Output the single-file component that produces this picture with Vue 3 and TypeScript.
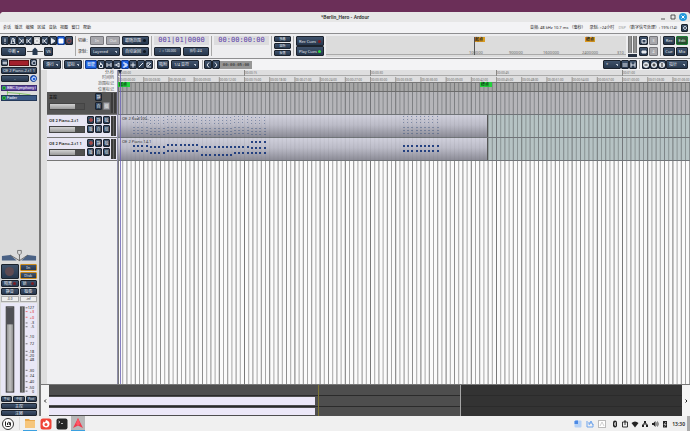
<script setup lang="ts">
interface Note { x: number; y: number; w: number; o: number }

const menus = ['会话', '播送', '编辑', '区域', '音轨', '视图', '窗口', '帮助']

const transportIcons = [
  { name: 'MIDI 紧急停止', d: 'M4 1.5V5M4 6V7' },
  { name: '节拍器', d: 'M2 7L3.3 1.5H4.7L6 7ZM4 5L5.5 2' },
  { name: '跳到起点', d: 'M2 1.5L5 4L2 6.5M6 2V6' },
  { name: '跳到终点', d: 'M6 1.5L3 4L6 6.5M2 2V6' },
  { name: '循环', d: 'M4 2A2 2 0 1 0 4.1 2Z', cls: 'light' },
  { name: '播放选区', d: 'M6 1.5L3 4L6 6.5M2 2V6' },
  { name: '播放', d: 'M2.5 1.5L6 4L2.5 6.5Z', fill: true },
  { name: '停止', d: 'M2 2H6V6H2Z', cls: 'active', fill: true },
  { name: '录音', d: 'M4 2A2 2 0 1 0 4.1 2Z', cls: 'rec' },
]

const toolIcons = [
  { name: '抓取', d: 'M2.5 4V6.5H5.5V3.5M3.5 4V1.5M4.5 4V2.5', cls: '' },
  { name: '范围', d: 'M2 2V6M6 2V6M2.5 4H5.5', cls: '' },
  { name: '剪切', d: 'M1.5 4H3L6 2V6L3 4', cls: '' },
  { name: '伸缩', d: 'M2 2H4V6H2M4 3H6V5H4', cls: 'active' },
  { name: '网格', d: 'M4 1.5V6.5M1.5 4H6.5', cls: '' },
  { name: '绘制', d: 'M2 6L6 2', cls: '' },
  { name: '内部编辑', d: 'M2 2H5M2 2V6H6M3 5L6 2', cls: '' },
]

const PX_PER_SEC = 8.4
const seconds = Math.max(60, (window.innerWidth - 118) / PX_PER_SEC)
const grid = Array.from({ length: Math.ceil(seconds * 2) }, (_, i) => ({
  x: 1 + (i * PX_PER_SEC) / 2,
  o: i % 6 === 0 ? 0.85 : i % 2 === 0 ? 0.7 : 0.55,
}))

const pad = (n: number) => String(n).padStart(2, '0')
const stamp = (s: number) => `00:${pad(Math.floor(s / 60))}:${pad(s % 60)}`
const majors = Array.from({ length: Math.floor((seconds - 2) / 15) + 1 }, (_, i) => ({ x: 1 + i * 15 * PX_PER_SEC, t: stamp(i * 15) }))
const minors = Array.from({ length: Math.floor((seconds - 2) / 3) + 1 }, (_, i) => ({ x: 1 + i * 3 * PX_PER_SEC, t: stamp(i * 3) + ':00' }))

const phrases: [number, number, number[]][] = [
  [16, 4, [145, 150]], [33, 4, [146, 152]], [50, 8, [144, 150]],
  [84, 8, [146, 154]], [117, 4, [146, 152]], [134, 4, [141, 147, 152]],
  [286, 9, [145, 150]],
]
const pianoNotes: Note[] = phrases.flatMap(([x, n, ys]) =>
  ys.flatMap((y) => Array.from({ length: n }, (_, i) => ({ x: Math.round(x + i * 4.2), y: y - 70, w: 2, o: 0.95 }))))
const padRows = [116, 119, 122, 127, 130, 133]
const padNotes: Note[] = phrases.flatMap(([x, n], p) =>
  padRows.flatMap((y, r) => Array.from({ length: n }, (_, i) => ({
    x: Math.round(x + i * 4.2), y: y - 70 + (p % 2 && p < 6 ? 1 : 0), w: r < 3 ? 1 : 2, o: r < 3 ? 0.45 : 0.4,
  }))))

const meterMarks = [
  { t: '127', y: 3 }, { t: '+3', y: 7, red: true }, { t: '+0', y: 13, red: true }, { t: '-3', y: 19 },
  { t: '-5', y: 23 }, { t: '-10', y: 33 }, { t: '72', y: 41 }, { t: '-18', y: 49 }, { t: '-20', y: 53 },
  { t: '48', y: 58 }, { t: '-30', y: 69 }, { t: '24', y: 75 }, { t: '-40', y: 81 }, { t: '-50', y: 87 }, { t: '0', y: 91 },
]

const tracks = ['OE 2 Piano-2-t1', 'OE 2 Piano-2-t1 1']
const miniTicks = [
  { x: 143, t: '100000' }, { x: 183, t: '900000' }, { x: 217, t: '1600000' }, { x: 256, t: '2400000' }, { x: 291, t: '310' },
]
</script>

<template>
  <div class="desktop">
    <div class="window">
      <header class="titlebar">
        <span></span>
        <h1>*Berlin_Hero - Ardour</h1>
        <div class="winctl">
          <button aria-label="最小化"><svg viewBox="0 0 8 8"><path d="M2 6H6" /></svg></button>
          <button aria-label="最大化"><svg viewBox="0 0 8 8"><path d="M2 2H6V6H2Z" /></svg></button>
          <button class="close" aria-label="关闭"><svg viewBox="0 0 8 8"><path d="M2.5 2.5L5.5 5.5M5.5 2.5L2.5 5.5" /></svg></button>
        </div>
      </header>

      <nav class="menubar">
        <div class="menus"><a v-for="m in menus" :key="m" href="#">{{ m }}</a></div>
        <div class="status">
          <span>音频: 48 kHz 10.7 ms （毫秒）</span>
          <span>录制: &gt;24小时</span>
          <span><i>DSP</i> （数字信号处理）: 19% (14)</span>
          <button class="btn sq" aria-label="日志"><svg viewBox="0 0 8 8"><path d="M4 2.500A1.500 1.500 0 1 0 4.100 2.500Z" /></svg></button>
        </div>
      </nav>

      <section class="transport">
        <div class="stack main-transport">
          <div class="line">
            <button v-for="b in transportIcons" :key="b.name" class="btn icon" :class="b.cls" :aria-label="b.name">
              <svg viewBox="0 0 8 8"><path :d="b.d" :class="{ solid: b.fill }" /></svg>
            </button>
          </div>
          <div class="line">
            <button class="btn sync">中断 ▾</button>
            <svg class="shuttle" viewBox="0 0 16 9"><path d="M0 4.5H16" stroke="#555" /><path d="M5.500 3L8 .5L10.500 3V8H5.500Z" fill="#26384f" /></svg>
            <button class="btn vs">VS</button>
          </div>
        </div>
        <hr />
        <div class="stack captions"><span>切换：</span><span>录制：</span></div>
        <div class="stack punch">
          <div class="line gap3"><button class="btn off grow">In</button><button class="btn off grow">Out</button></div>
          <select class="btn" aria-label="录制模式"><option>Layered</option></select>
        </div>
        <div class="stack follow">
          <button class="btn led">跟随范围<b></b></button>
          <button class="btn led">自动返回<b></b></button>
        </div>
        <hr />
        <div class="stack clockbox">
          <output class="clock">001|01|0000</output>
          <div class="line gap3"><button class="btn grow tiny">♩ = 120.000</button><button class="btn grow tiny">拍号: 4/4</button></div>
        </div>
        <hr />
        <div class="stack clockbox"><output class="clock">00:00:00:00</output></div>
        <hr />
        <div class="stack three">
          <button class="btn">独奏</button><button class="btn">监听</button><button class="btn">反馈</button>
        </div>
        <hr />
        <div class="stack cues">
          <button class="btn led">Rec Cues<b class="red"></b></button>
          <button class="btn led">Play Cues<b class="green"></b></button>
        </div>
        <svg class="mini">
          <path d="M0 18.500H1000" stroke="#aaa" />
          <rect x="148" y="1" width="11" height="5" fill="#dc9a20" /><path d="M148.500 1V19" stroke="#555" />
          <rect x="259" y="1" width="10" height="5" fill="#dc9a20" />
          <text x="149" y="5" class="flag">起点</text><text x="260" y="5" class="flag">终点</text>
          <text v-for="m in miniTicks" :key="m.t" :x="m.x" y="18">{{ m.t }}</text>
        </svg>
        <svg class="outmeter" viewBox="0 0 9 21"><path d="M0 0H4V17H0ZM5 0H9V17H5Z" fill="#777" /><path d="M2 0V17M7 0V17" stroke="#aaa" /><path d="M0 18H9V21H0Z" fill="#26303f" /></svg>
        <div class="modes four">
          <button class="btn" aria-label="编辑器列表"><svg viewBox="0 0 8 8"><path d="M2 2.500H6V6H2Z" /></svg></button><button class="btn off">3</button>
          <button class="btn" aria-label="混音器列表"><svg viewBox="0 0 8 8"><path class="solid" d="M2 3H6V5H2Z" /></svg></button><button class="btn off">4</button>
        </div>
        <hr />
        <div class="modes pages">
          <button class="btn">Rec</button><button class="btn on">Edit</button>
          <button class="btn">Cue</button><button class="btn">Mix</button>
        </div>
      </section>

      <main class="body">
        <aside class="strip">
          <div class="line hd"><button class="btn" aria-label="收窄"><svg viewBox="0 0 8 8"><path d="M1.500 4H6.500M3 2.500V5.500M5 2.500V5.500" /></svg></button><span class="tape"></span><button class="btn" aria-label="隐藏"><svg viewBox="0 0 8 8"><path d="M4 2A2 2 0 1 0 4.100 2Z" /></svg></button></div>
          <button class="btn name">OE 2 Piano-2-t1 1</button>
          <div class="line io"><button class="btn grow">-</button><button class="btn active" aria-label="MIDI 输入"><svg viewBox="0 0 8 8"><path d="M4 2A2 2 0 1 0 4.100 2Z" /></svg></button></div>
          <div class="procs">
            <div class="proc plug"><b></b>BBC Symphony Or</div>
            <svg class="cable" viewBox="0 0 39 4"><path d="M7 0V1.500L20 2.500L32 4M7 0V4M20 2V4" fill="none" stroke="#7cbf5e" /></svg>
            <div class="proc"><b></b>Fader</div>
          </div>
          <svg class="pan" viewBox="0 0 39 14">
            <path d="M1 7L10 6L17 12H1ZM38 7L29 6L22 12H38Z" fill="#4b6285" />
            <path d="M10 6L20 12L29 6M20 5V12" fill="none" stroke="#333" stroke-width=".7" />
            <path d="M18 1H22V4L20 6L18 4Z" fill="#ddd" stroke="#333" stroke-width=".6" />
          </svg>
          <div class="recgrid">
            <button class="btn recbtn" aria-label="录音准备"><b></b></button>
            <button class="btn gold">In</button><button class="btn gold">Disk</button>
          </div>
          <div class="pair"><button class="btn led">隔离<b class="red"></b></button><button class="btn led">锁<b class="red"></b></button></div>
          <div class="pair"><button class="btn">静音</button><button class="btn">独奏</button></div>
          <div class="pair vals"><output>-0.0</output><output>-inf</output></div>
          <svg class="faders" viewBox="0 0 38 92">
            <defs><linearGradient id="fd"><stop offset="0" stop-color="#888" /><stop offset=".5" stop-color="#c2c2c2" /><stop offset="1" stop-color="#808080" /></linearGradient></defs>
            <rect x="5.500" y="1.500" width="8" height="90" fill="url(#fd)" stroke="#333" />
            <rect x="6" y="2" width="7" height="18" fill="#505056" />
            <rect x="20" y="1" width="5" height="91" fill="#555" />
            <path d="M22.500 1V92" stroke="#888" />
            <g v-for="m in meterMarks" :key="m.t">
              <path :d="`M26 ${m.y - 0.500}h2`" :stroke="m.red ? '#e33' : '#333'" stroke-width=".7" />
              <text x="35" text-anchor="end" :y="m.y + 1" :class="{ r: m.red }">{{ m.t }}</text>
            </g>
          </svg>
          <div class="triple"><button class="btn">手动</button><button class="btn">中组</button><button class="btn">Post</button></div>
          <button class="btn wide">主控</button>
          <button class="btn wide">注释</button>
        </aside>

        <section class="editor">
          <div class="tools">
            <select class="btn w18" aria-label="编辑模式"><option>滑行</option></select>
            <hr />
            <select class="btn w18" aria-label="编辑点"><option>鼠标</option></select>
            <hr />
            <div class="line">
              <button class="btn active w12">智能</button>
              <button v-for="t in toolIcons" :key="t.name" class="btn icon" :class="t.cls" :aria-label="t.name">
                <svg viewBox="0 0 8 8"><path :d="t.d" /></svg>
              </button>
            </div>
            <hr />
            <div class="line snap">
              <button class="btn w12">吸附</button>
              <select class="btn w28" aria-label="网格"><option>1/4 音符</option></select>
            </div>
            <hr />
            <div class="line">
              <button class="btn icon" aria-label="向前"><svg viewBox="0 0 8 8"><path d="M5 1.500L3 4L5 6.500" /></svg></button>
              <button class="btn icon" aria-label="向后"><svg viewBox="0 0 8 8"><path d="M3 1.500L5 4L3 6.500" /></svg></button>
              <output class="nudge">00:00:05:00</output>
            </div>
            <span class="spacer"></span>
            <div class="line">
              <select class="btn w18" aria-label="轨道数"><option>*</option></select>
              <button class="btn icon" aria-label="缩小轨道"><svg viewBox="0 0 8 8"><path d="M1.500 3H6.500M1.500 5H6.500" /></svg></button>
              <button class="btn icon" aria-label="放大轨道"><svg viewBox="0 0 8 8"><path d="M2 1.500V6.500M6 1.500V6.500M2 4H6" /></svg></button>
            </div>
            <hr class="roomy" />
            <div class="line">
              <button class="btn icon zoomer" aria-label="缩小"><svg viewBox="0 0 8 8"><path class="disc" d="M4 1A3 3 0 1 0 4.100 1Z" /><path class="ink" d="M2.500 4H5.500" /></svg></button>
              <button class="btn icon zoomer" aria-label="放大"><svg viewBox="0 0 8 8"><path class="disc" d="M4 1A3 3 0 1 0 4.100 1Z" /><path class="ink" d="M2.500 4H5.500M4 2.500V5.500" /></svg></button>
              <button class="btn icon zoomer" aria-label="缩放到会话"><svg viewBox="0 0 8 8"><path class="disc" d="M4 1A3 3 0 1 0 4.100 1Z" /><path class="ink" d="M4 2V6" /></svg></button>
              <select class="btn w22" aria-label="缩放焦点"><option>指针</option></select>
            </div>
          </div>

          <div class="arrange">
            <div class="gutter"></div>
            <div class="headers">
              <div class="rulernames"><span>分:秒</span><span>时间码</span><span>范围标记</span><span>位置标记</span></div>
              <div class="head master">
                <div class="left"><span>主控</span><i class="fader"></i></div>
                <div class="keys"><button class="btn k2">静</button><button class="btn k2">自</button><button class="btn off">组</button></div>
                <i class="vu"></i>
              </div>
              <div v-for="t in tracks" :key="t" class="head">
                <div class="left"><span>{{ t }}</span><i class="fader"></i></div>
                <div class="keys">
                  <button class="btn rec" aria-label="录音"><svg viewBox="0 0 8 8"><path class="solid" d="M4 2.500A1.500 1.500 0 1 0 4.100 2.500Z" /></svg></button><button class="btn">静</button><button class="btn">独</button>
                  <button class="btn">播</button><button class="btn">自</button><button class="btn">组</button>
                </div>
                <i class="vu"></i>
              </div>
            </div>
            <svg class="canvas">
              <defs>
                <linearGradient id="rg" x2="0" y2="1"><stop offset="0" stop-color="#d0d0dc" /><stop offset=".45" stop-color="#bcbcc8" /><stop offset="1" stop-color="#8c8c97" /></linearGradient>
              </defs>
              <rect width="100%" height="12" fill="#dededf" />
              <rect y="5" width="100%" height="1" fill="#aaa" />
              <rect y="12" width="100%" height="10" fill="#a6a6a6" />
              <rect y="22" width="100%" height="23" fill="#b5b5b9" />
              <rect y="45" width="100%" height="46" fill="#b6c3c4" />
              <rect y="91" width="100%" height="100%" fill="#fbfbfb" />
              <g v-for="g in grid" :key="g.x">
                <rect :x="g.x" y="12" width="1" height="79" fill="#4c4f52" :opacity="g.o * 0.75" />
                <rect :x="g.x" y="91" width="1" height="100%" fill="#606060" :opacity="g.o" />
              </g>
              <rect y="12" width="100%" height="1" fill="#777" />
              <rect y="21" width="100%" height="1" fill="#6c6c6c" />
              <rect y="44" width="100%" height="1" fill="#707478" />
              <rect y="67" width="100%" height="1" fill="#707478" />
              <rect y="90" width="100%" height="1" fill="#707478" />
              <g v-for="m in majors" :key="m.t">
                <rect :x="m.x" y="0" width="1" height="6" fill="#888" /><text :x="m.x + 1" y="4">{{ m.t }}</text>
              </g>
              <g v-for="m in minors" :key="m.t">
                <rect :x="m.x" y="7" width="1" height="5" fill="#999" /><text :x="m.x + 1" y="11">{{ m.t }}</text>
              </g>
              <g v-for="y in [45, 68]" :key="y">
                <rect x="1" :y="y" width="370" height="22" fill="url(#rg)" />
                <rect x="370" :y="y" width="1" height="22" fill="#555" />
              </g>
              <rect v-for="g in grid.slice(0, 88)" :key="'r' + g.x" :x="g.x" y="45" width="1" height="45" fill="#444" :opacity="g.o * 0.1" />
              <rect v-for="(n, i) in padNotes" :key="'p' + i" :x="n.x" :y="n.y" :width="n.w" height="1" fill="#2c4878" :opacity="n.o" />
              <rect v-for="(n, i) in pianoNotes" :key="'n' + i" :x="n.x" :y="n.y" :width="n.w" height="2" fill="#1b3a7c" :opacity="n.o" />
              <text x="5" y="50" class="rname">OE 2 Pad(100..</text>
              <text x="5" y="73" class="rname">OE 2 Piano 14.1</text>
              <rect x="1" y="12" width="12" height="5" fill="#23d23c" /><text x="2" y="16" class="flag">起点</text>
              <rect x="363" y="12" width="12" height="5" fill="#23d23c" /><text x="364" y="16" class="flag">终点</text>
              <rect x="0" y="0" width="1" height="100%" fill="#8d8da8" />
              <rect x="3" y="0" width="1" height="100%" fill="#6a62b4" opacity=".8" />
              <path d="M1 0H5L3 4Z" fill="#1d2940" />
            </svg>
          </div>

          <div class="summary">
            <button aria-label="向左滚动"><svg viewBox="0 0 8 8"><path d="M5 2.500L3.500 4L5 5.500" /></svg></button>
            <svg class="overview">
              <rect width="100%" height="100%" fill="#333" />
              <rect width="411" height="100%" fill="#4e4e4e" />
              <rect y="10" width="100%" height="1" fill="#2b2b2b" /><rect y="21" width="100%" height="1" fill="#2b2b2b" />
              <rect y="12" width="266" height="8" fill="#ece8f8" /><rect y="23" width="266" height="7" fill="#ece8f8" />
              <rect x="269" width="1" height="100%" fill="#7d7433" /><rect x="411" width="1" height="100%" fill="#a5a5a5" />
            </svg>
            <button aria-label="向右滚动"><svg viewBox="0 0 8 8"><path d="M3.500 2.500L5 4L3.500 5.500" /></svg></button>
          </div>
        </section>
      </main>
    </div>

    <footer class="taskbar">
      <button aria-label="菜单"><svg viewBox="0 0 14 14"><circle cx="7" cy="7" r="5.500" fill="#fff" stroke="#333" /><path d="M4.500 4.500V8.500Q4.500 9.500 5.500 9.500H8.500Q9.500 9.500 9.500 8.500V6Q9.500 5 8.300 5.500V8M8.300 6Q7.500 4.500 6.500 6V8" fill="none" stroke="#222" /></svg></button>
      <hr />
      <button class="open" aria-label="文件"><svg viewBox="0 0 14 14"><path d="M2 3H6L7 4H12V11H2Z" fill="#e9a94d" /><path d="M2 5H12V12H2Z" fill="#f6c67c" /></svg></button>
      <button aria-label="浏览器"><svg viewBox="0 0 14 14"><rect x="1.500" y="1.500" width="11" height="11" rx="2.500" fill="#f04438" /><path d="M7 3Q11 4 10.500 7.500Q10 10.500 7 10.500Q3.500 10 3.500 7L4.500 4.500L6 5.500Z" fill="#fff" /><circle cx="7" cy="7.500" r="1.500" fill="#f04438" /></svg></button>
      <button aria-label="终端"><svg viewBox="0 0 14 14"><rect x="1.500" y="1.500" width="11" height="11" rx="2" fill="#262828" /><path d="M3.500 4L5 5L3.500 6M6 6.500H8" fill="none" stroke="#ddd" stroke-width=".8" /></svg></button>
      <button class="open current" aria-label="Ardour"><svg viewBox="0 0 14 14"><path d="M7 2L12 12L7 9.500L2 12Z" fill="#f03a4c" /><path d="M7 2L9 8L7 9.500L5 8Z" fill="#ff5565" /></svg></button>
      <span class="spacer"></span>
      <div class="tray">
        <svg viewBox="0 0 8 8"><rect x=".5" y=".5" width="7" height="7" rx="1" fill="#b6d2f6" /><path d="M.5 4H4V.5H1.500L.5 1.500Z" fill="#4a88e4" /></svg>
        <svg viewBox="0 0 8 8"><path d="M1 1V7H7V4M3 5L5 1L7 5M2 3H6" fill="none" stroke="#6ea4ec" /></svg>
        <svg viewBox="0 0 8 8"><rect x=".5" y=".5" width="7" height="7" fill="#fff" stroke="#bbb" /><path d="M2 6L4 2L6 6" fill="none" stroke="#bbb" stroke-width=".7" /></svg>
      </div>
      <div class="tray dark">
        <svg viewBox="0 0 8 8"><rect x="2" y="0.500" width="4" height="7" rx="2" fill="#222" /><path d="M3 3L5 5L4 6V2L5 3L3 5" fill="none" stroke="#fff" stroke-width=".5" /></svg>
        <svg viewBox="0 0 8 8"><path d="M1.500 2H6.500V7H1.500ZM4 1V5M3 1H5" fill="none" stroke="#222" stroke-width=".9" /></svg>
        <svg viewBox="0 0 8 8"><path d="M.5 3Q4 0 7.500 3L4 7.500Z" fill="#222" /></svg>
        <svg viewBox="0 0 8 8"><path d="M3 1H5V3H3ZM1 5H3V7H1ZM5 5H7V7H5Z" fill="#222" /><path d="M4 3V4M2 5V4H6V5" fill="none" stroke="#222" /></svg>
        <svg viewBox="0 0 8 8"><path d="M1 3H2.500L4.500 1V7L2.500 5H1Z" fill="#222" /><path d="M5.500 2.500Q6.500 4 5.500 5.500M6.500 1.500Q8 4 6.500 6.500" fill="none" stroke="#222" stroke-width=".7" /></svg>
        <svg viewBox="0 0 8 8"><path d="M2 1H6V7.500H2Z" fill="#222" /><path d="M5 2L3 4.500H5L3.500 6.500" fill="none" stroke="#fff" stroke-width=".6" /></svg>
      </div>
      <time>13:30</time>
      <i class="showdesk"></i>
    </footer>
  </div>
</template>

<style>
body { background: #6b2f58; }
</style>

<style scoped>
.desktop, .desktop * { box-sizing: border-box; }
.desktop {
  min-height: 100vh; display: flex; flex-direction: column; padding-top: 12px;
  background: #6b2f58; font: 5px/6px "Noto Sans", "Noto Sans CJK SC", sans-serif; color: #222; overflow: hidden;
}
button, select { font: inherit; color: inherit; border: 0; padding: 0; margin: 0; background: none; }
i { font-style: normal; }
hr { width: 1px; height: 100%; margin: 0; border: 0; background: #a8a8a8; flex: none; }
.window { flex: 1; display: flex; flex-direction: column; background: #f3f3f5; border-radius: 4px 4px 0 0; overflow: hidden; }

.titlebar { height: 10px; display: grid; grid-template-columns: 1fr auto 1fr; align-items: center; background: #e7e7e7; }
.titlebar h1 { margin: 0; font: 600 5px/6px Roboto, sans-serif; color: #333; }
.winctl { display: flex; justify-content: flex-end; gap: 2px; padding-right: 3px; }
.winctl svg { display: block; width: 8px; height: 8px; fill: none; stroke: #333; stroke-width: .8; }
.winctl .close { border-radius: 50%; background: #2498dc; }
.winctl .close svg { stroke: #fff; stroke-width: 1; }

.menubar { height: 12px; display: flex; align-items: center; justify-content: space-between; padding: 0 2px 0 3px; border-bottom: 1px solid #8e8e90; font-size: 4px; white-space: nowrap; }
.menus { display: flex; justify-content: space-between; width: 88px; }
.menubar a { color: #222; text-decoration: none; }
.status { display: flex; align-items: center; gap: 4px; }
.status i { color: #999; }
.status .sq { width: 7px; height: 8px; }

.btn {
  display: flex; align-items: center; justify-content: center; white-space: nowrap; overflow: hidden; min-width: 0;
  background: linear-gradient(#40536c, #27374d); color: #e6eaf0; border: 1px solid #1c232d; border-radius: 1px;
  height: 9px; font-size: 4px; line-height: 5px;
}
select.btn { appearance: none; padding: 0 2px; display: block; background-image: linear-gradient(45deg, transparent 50%, #b5bfcc 50%), linear-gradient(#40536c, #27374d); background-size: 2px 2px, 100% 100%; background-position: right 2px center, 0 0; background-repeat: no-repeat; }
.btn.off { background: #a7a7ac; color: #eee; border-color: #77777c; }
.btn.light { background: #c4c6ca; color: #fff; }
.btn.active { background: #1f63e0; color: #fff; border-color: #123a8c; }
.btn.on { background: linear-gradient(#37573f, #1f4a2a); border-color: #1e7a34; }
.btn.rec { color: #a04a4a; }
.btn.icon { width: 8px; flex: none; }
.btn svg { width: 8px; height: 8px; flex: none; fill: none; stroke: currentColor; stroke-width: 1; }
.btn .solid { fill: currentColor; }
.grow { flex: 1; }
.line { display: flex; align-items: center; }
.gap3 { gap: 2px; }
.led { justify-content: space-between; padding: 0 2px; }
.led b { width: 3px; height: 3px; border-radius: 50%; background: #101820; flex: none; }
.led b.red { background: #7e1d22; }
.led b.green { background: #2bdc3a; }

.transport { display: flex; height: 25px; padding: 2px 2px 2px 1px; gap: 2px; border-bottom: 1px solid #8e8e90; background: #ededef; flex: none; }
.stack { display: flex; flex-direction: column; justify-content: space-between; flex: none; }
.main-transport { width: 72px; }
.sync { width: 25px; }
.shuttle { width: 16px; height: 9px; margin: 0 1px; }
.vs { width: 9px; }
.captions { width: 10px; font-size: 4px; line-height: 9px; white-space: nowrap; }
.punch { width: 30px; }
.follow { width: 27px; }
.clockbox { width: 55px; }
.clock { height: 9px; background: #dcdcde; color: #5b3fa8; font: 7px/9px "DejaVu Sans Mono", monospace; text-align: center; }
.tiny { font-size: 3px; }
.three { width: 17px; }
.three .btn { height: 6px; font-size: 3px; }
.cues { width: 28px; }
.cues .btn { height: 10px; }
.mini { flex: 1; min-width: 0; height: 21px; background: #dcdcdc; }
.mini text { font-size: 4px; fill: #666; }
.mini .flag { font-size: 4px; font-weight: 700; fill: #222; }
.outmeter { width: 9px; height: 21px; flex: none; }
.modes { display: grid; align-content: space-between; column-gap: 1px; flex: none; }
.four { grid-template-columns: 9px 9px; }
.pages { grid-template-columns: 12px 12px; }

.body { flex: 1; display: flex; min-height: 0; }
.strip { width: 41px; display: flex; flex-direction: column; gap: 1px; padding: 0 2px 0 1px; background: #dbdbdb; border-right: 2px solid #777; flex: none; }
.strip .btn { height: 7px; }
.hd .btn { width: 7px; }
.tape { flex: 1; height: 6px; background: #a3202c; margin: 0 1px; border: 1px solid #5e1218; }
.io { gap: 1px; }
.io .active { width: 7px; border-radius: 50%; }
.procs { flex: 1; padding-top: 2px; }
.proc { height: 6px; background: #3c5a86; color: #fff; font: 4px/4px Roboto, sans-serif; border: 1px solid #24395a; display: flex; gap: 1px; white-space: nowrap; overflow: hidden; }
.proc b { width: 4px; height: 4px; border-radius: 50%; background: #1c5c2c; border: 1px solid #2bc844; flex: none; }
.plug { background: #6048a0; border-color: #3d2d70; }
.cable { display: block; width: 100%; height: 4px; }
.pan { width: 100%; height: 14px; flex: none; }
.recgrid { display: grid; grid-template-columns: 1fr 1fr; gap: 1px; }
.strip .recbtn { grid-row: span 2; height: 15px; }
.recbtn b { width: 9px; height: 9px; border-radius: 50%; background: #5e4a52; }
.btn.gold { border-color: #c98a1e; }
.pair { display: grid; grid-template-columns: 1fr 1fr; gap: 1px; }
.vals output { border: 1px solid #aaa; background: #eee; height: 6px; font-size: 3px; line-height: 4px; text-align: center; }
.faders { width: 100%; height: 92px; background: #e9e7f6; flex: none; }
.faders text { font-size: 4px; fill: #222; }
.faders .r { fill: #e02020; }
.triple { display: grid; grid-template-columns: repeat(3, 1fr); gap: 1px; }
.strip .triple .btn { height: 6px; font-size: 3px; }
.strip .wide { height: 6px; }

.editor { flex: 1; min-width: 0; display: flex; flex-direction: column; }
.tools { height: 11px; display: flex; align-items: center; gap: 1px; padding: 1px 2px; flex: none; }
.snap { gap: 2px; padding: 0 2px 0 1px; }
.roomy { margin: 0 1px; }
.w12 { width: 12px; } .w18 { width: 18px; } .w22 { width: 22px; } .w28 { width: 28px; }
.nudge { width: 32px; height: 8px; background: #969696; color: #222; font: 4px/8px "DejaVu Sans Mono", monospace; text-align: center; }
.spacer { flex: 1; }
.disc { fill: #dfe3e8; stroke: none; }
.ink { stroke: #222; }

.arrange { flex: 1; display: flex; min-height: 0; background: #f0f0f2; }
.gutter { width: 6px; background: #dedede; flex: none; }
.headers { width: 70px; flex: none; }
.rulernames { height: 22px; display: grid; grid-template-rows: 5px 6px 6px 5px; font-size: 4px; text-align: right; padding-right: 3px; color: #555; }
.head { height: 23px; display: grid; grid-template-columns: 1fr auto 5px; gap: 1px; padding: 1px 1px 1px 2px; background: #e8e6f4; border-bottom: 1px solid #777; white-space: nowrap; }
.head .left { display: flex; flex-direction: column; justify-content: space-between; padding: 2px 0 3px; min-width: 0; font-size: 4px; font-weight: 600; color: #222; }
.fader { width: 36px; height: 7px; border: 1px solid #444; background: linear-gradient(90deg, transparent 75%, #505050 75%), linear-gradient(#d2d2d2, #9a9a9a); }
.keys { display: grid; grid-template-columns: repeat(3, 7px); gap: 1px; align-content: start; }
.keys .btn { height: 8px; }
.k2 { grid-column: 2; }
.vu { background: repeating-linear-gradient(90deg, #3a3a3a 0 2px, #666 2px 3px); }
.master { background: #545454; }
.master .left { color: #1a1a1a; }
.canvas { flex: 1; min-width: 0; height: auto; display: block; }
.canvas text { font-size: 3px; fill: #666; }
.canvas .rname { font-size: 4px; fill: #333; }
.canvas .flag { font-size: 4px; font-weight: 700; fill: #103a16; }

.summary { height: 32px; display: flex; border-top: 1px solid #777; background: #f4f4f4; flex: none; }
.summary button { width: 8px; flex: none; }
.summary button svg { display: block; width: 8px; height: 8px; fill: none; stroke: #222; }
.overview { flex: 1; min-width: 0; height: 31px; }

.taskbar { height: 15px; display: flex; align-items: center; gap: 2px; padding-left: 1px; background: #f0f0f0; flex: none; }
.taskbar button { width: 14px; height: 15px; }
.taskbar button svg { display: block; width: 14px; height: 14px; }
.taskbar hr { margin: 0 1px 0 2px; height: 13px; background: #ddd; }
.open { border-bottom: 1px solid #3aa0e0; }
.taskbar .current { background: #b8b8b8; }
.tray { display: flex; gap: 4px; padding-right: 3px; }
.tray svg { width: 8px; height: 8px; }
.tray.dark { gap: 2px; padding-right: 1px; }
time { font: 600 5px/6px "Noto Sans", sans-serif; }
.showdesk { width: 3px; height: 15px; background: #aaa; }
</style>
